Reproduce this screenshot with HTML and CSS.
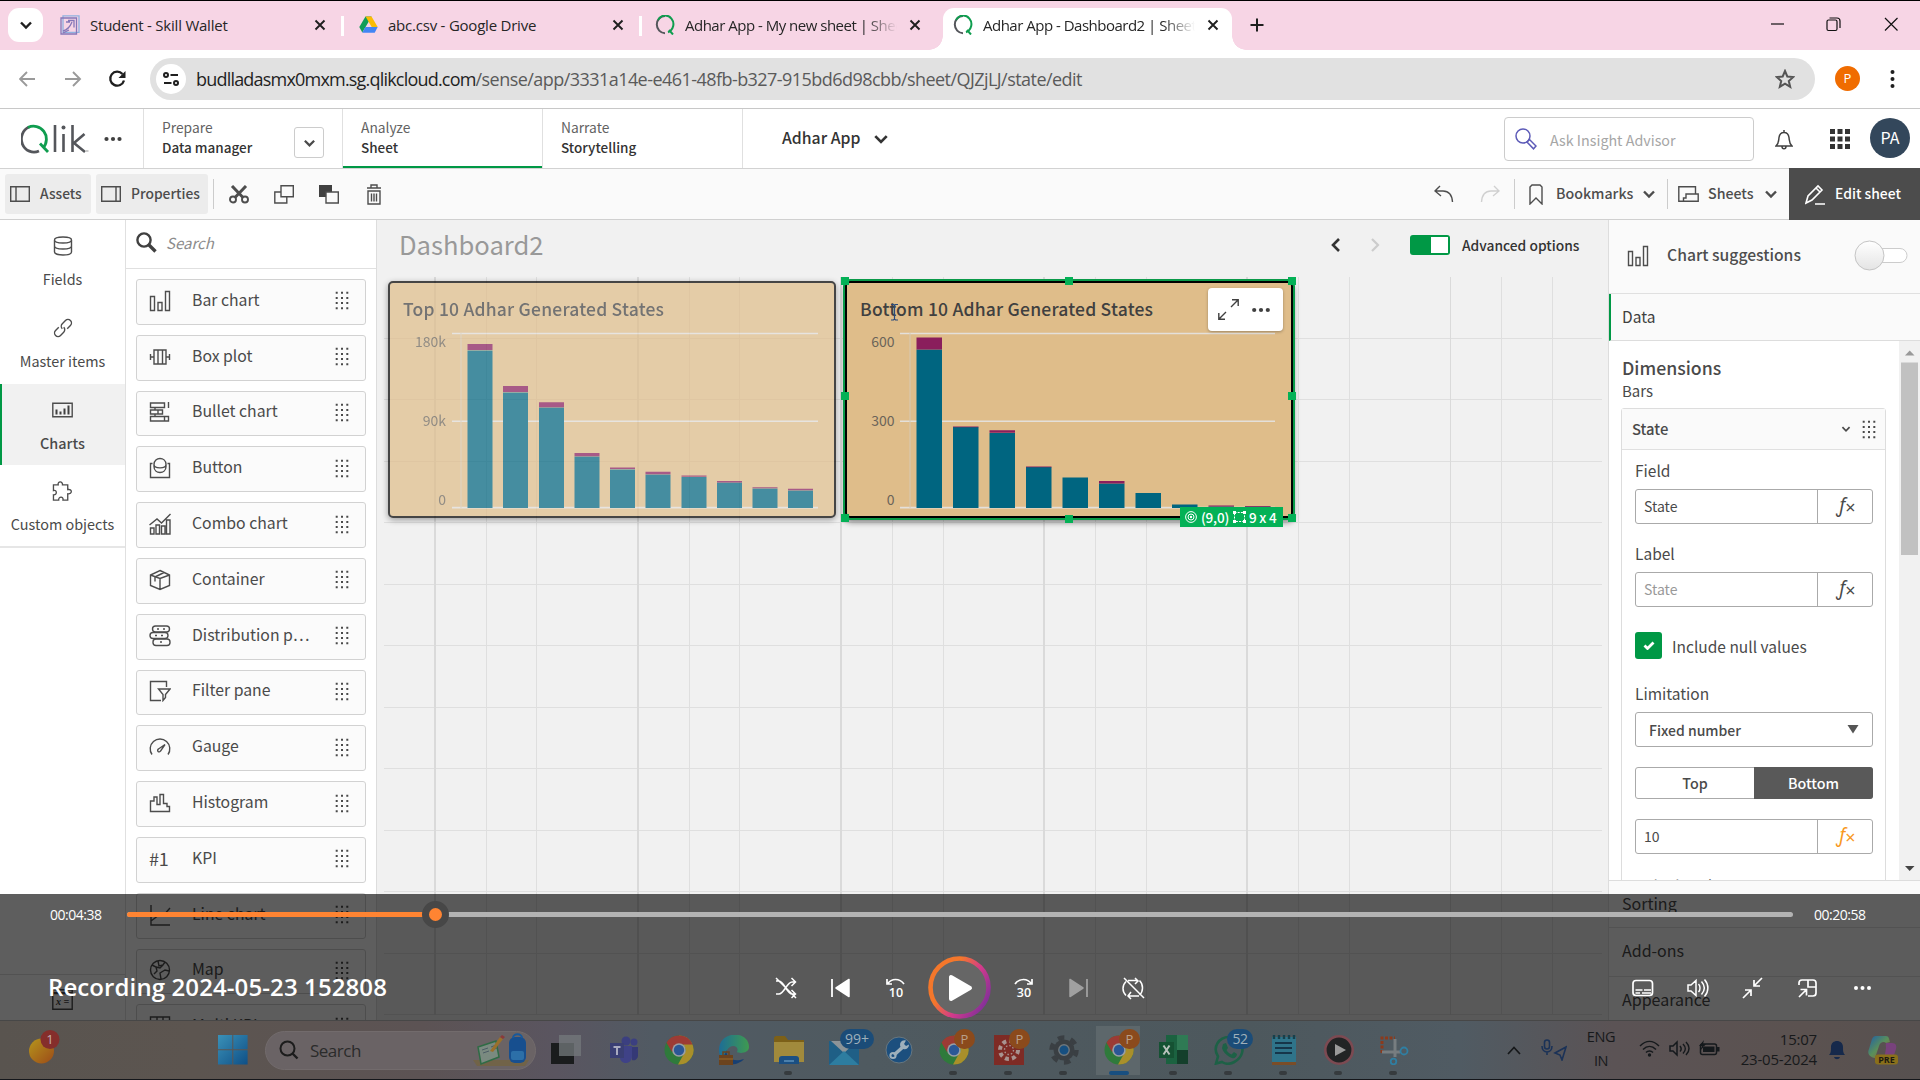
FILE: index.html
```html
<!DOCTYPE html>
<html lang="en">
<head>
<meta charset="utf-8">
<title>Adhar App - Dashboard2 | Sheet</title>
<link rel="stylesheet" href="styles.css">
</head>
<body>
<svg class="defs" width="0" height="0">
  <defs>
    <linearGradient id="ring" x1="0" y1=".2" x2="1" y2=".8"><stop offset="0.3" stop-color="#f4772b"/><stop offset=".62" stop-color="#d23a8c"/><stop offset="1" stop-color="#7c2f9a"/></linearGradient>
    <linearGradient id="win" x1="0" y1="0" x2="1" y2="1"><stop offset="0" stop-color="#3a91b8"/><stop offset="1" stop-color="#0f4f86"/></linearGradient>
    <linearGradient id="sun" x1="0" y1="0" x2="1" y2="1"><stop offset="0" stop-color="#b5961c"/><stop offset="1" stop-color="#9c4a18"/></linearGradient>
    <linearGradient id="edge" x1="0" y1="0" x2="1" y2="0"><stop offset="0" stop-color="#1d6d96"/><stop offset="1" stop-color="#3f9a50"/></linearGradient>
    <linearGradient id="cop" x1="0" y1="0" x2="1" y2="1"><stop offset="0" stop-color="#1e5fa8"/><stop offset=".5" stop-color="#5a8f5a"/><stop offset="1" stop-color="#a05a30"/></linearGradient>
    <linearGradient id="knob" x1="0" y1="0" x2="0" y2="1"><stop offset="0" stop-color="#fff"/><stop offset="1" stop-color="#e4e4e4"/></linearGradient>
  </defs>
  <symbol id="i-q" viewBox="0 0 20 20"><path d="M10 1a8.2 8.6 0 0 0 0 17.200" fill="none" stroke="#54565b" stroke-width="2"/><path d="M3 5A8.200 8.600 0 1 1 13 17.200" fill="none" stroke="#0f9d4f" stroke-width="2"/><path d="M14 15l4 4.500" stroke="#0f9d4f" stroke-width="2"/></symbol>
  <symbol id="i-x" viewBox="0 0 12 12"><path d="M1.500 1.500l9 9M10.500 1.500l-9 9" stroke="#1f1f1f" stroke-width="1.900"/></symbol>
  <symbol id="i-chev" viewBox="0 0 14 10"><path d="M2 2.500l5 5 5-5" fill="none" stroke="currentColor" stroke-width="2.400"/></symbol>
  <symbol id="i-grip" viewBox="0 0 14 19"><g fill="#4a4a4a"><path d="M.7.700h2v2h-2zM6 .7h2v2H6zM11.300.7h2v2h-2zM.7 5.900h2v2h-2zM6 5.900h2v2H6zM11.300 5.900h2v2h-2zM.7 11.100h2v2h-2zM6 11.100h2v2H6zM11.300 11.100h2v2h-2zM.7 16.300h2v2h-2zM6 16.300h2v2H6zM11.300 16.300h2v2h-2z"/></g></symbol>
  <symbol id="i-bars" viewBox="0 0 22 22"><path d="M1.500 6.500h4v14h-4zM9 12.500h4v8H9zM16.500 1.500h4v19h-4z"/></symbol>
  <symbol id="i-box" viewBox="0 0 22 22"><path d="M5 4h12v14H5zM9 4v14M13.500 4v14M1.500 8v6M20.500 8v6M1.500 11H5M17 11h3.500"/></symbol>
  <symbol id="i-bullet" viewBox="0 0 22 22"><path d="M1.500 2h14v4.500h-14zM1.500 9h12v4h-12zM1.500 15.500h18V20h-18zM6 6.500V9M6 13v2.500M19.500 1v6M9 9v4M15.500 15.500V20"/></symbol>
  <symbol id="i-button" viewBox="0 0 22 22"><path d="M3.500 6.500h-2v14h19v-14h-2M5 7.500c0-8 12-8 12 0v2c0 8-12 8-12 0zM5 7.500c0 4.500 12 4.500 12 0"/></symbol>
  <symbol id="i-combo" viewBox="0 0 22 22"><path d="M1.500 15h3.500v6H1.500zM7 12h3.500v9H7zM12.500 13H16v8h-3.500zM17.500 7h3.500v14h-3.500zM.5 12L8 6l4.500 4L21.500 1"/></symbol>
  <symbol id="i-cont" viewBox="0 0 22 22"><path d="M11 1.500l9.500 4.500v10.500L11 20.500l-9.500-4V6zM1.500 6L11 9.500 20.500 6M11 9.500v11M6 8v4.500M6 8l9-4.500"/></symbol>
  <symbol id="i-dist" viewBox="0 0 22 22"><rect x="3.500" y="1" width="17" height="6" rx="3"/><rect x="1" y="7.500" width="18" height="6" rx="3"/><rect x="4" y="14" width="17" height="6.500" rx="3"/><path d="M8 4h2M14 4h2M6 10.500h2M12 10.500h2M11 17h2"/></symbol>
  <symbol id="i-filter" viewBox="0 0 22 22"><path d="M17.500 7V1.500h-16v19H12M9.500 9h11.500l-4.500 5.500v3l-2.500 3v-6z"/></symbol>
  <symbol id="i-gauge" viewBox="0 0 22 22"><path d="M3 18.500A9.800 9.800 0 1 1 19 18.500M16 8.500l-6.500 4.500a1.500 1.500 0 1 0 2 2z"/></symbol>
  <symbol id="i-hist" viewBox="0 0 22 22"><path d="M1.500 19.500V9H5V5h3v7.500h3V2.500h3.500v9H18v3h2.500v5z"/></symbol>
  <symbol id="i-line" viewBox="0 0 22 22"><path d="M2 1v20h19M2 17l8-6 4 1 7-8"/></symbol>
  <symbol id="i-map" viewBox="0 0 22 22"><circle cx="11" cy="11" r="9.500"/><path d="M3 6l4 2 1 4-3 3M9 2l1 5 4-1 2-3M12 20l-1-6 5-3 4 1M7 8l4 1 3-3"/></symbol>
  <symbol id="i-table" viewBox="0 0 22 22"><path d="M1.500 2h19v18h-19zM1.500 8h19M8 2v18M14 2v18"/></symbol>
  <symbol id="i-chrome" viewBox="0 0 30 30"><circle cx="15" cy="15" r="14.500" fill="#2f7a3b"/><path d="M15 .5A14.500 14.500 0 0 1 27.600 22.300 14.500 14.500 0 0 1 14 29.500L22 15z" fill="#a98f2a"/><path d="M2.500 7.700A14.500 14.500 0 0 1 28.500 9.500H15L8 17z" fill="#9c3b35"/><circle cx="15" cy="15" r="6.800" fill="#9a9fa4"/><circle cx="15" cy="15" r="5.200" fill="#2b5796"/></symbol>
</svg>

<div class="app">
  <header class="tabs">
    <span class="tab-menu"><svg width="14" height="10"><use href="#i-chev"/></svg></span>
    <div class="tab t1"><svg width="20" height="20" viewBox="0 0 20 20"><g fill="none" stroke="#8577b8" stroke-width="1.300"><path d="M3 .8h16v16.500H3z" stroke="#8fb2e0"/><path d="M1 3h15.500v16H1z"/><path d="M3 16c4-1 7-4 9-9M8 5.500h6v7M6 7h4M3 18l6-3"/></g></svg><b class="name s1">Student - Skill Wallet</b><svg class="close" width="12" height="12"><use href="#i-x"/></svg></div>
    <div class="tab t2"><svg width="19" height="18" viewBox="0 0 19 18"><path d="M6.500.5h6L9.500 6 3.300 16.500.3 11z" fill="#109d58"/><path d="M6.500.5h6L18.700 11h-6z" fill="#fbbc04"/><path d="M3.300 16.800L6.400 11h12.300l-3 5.800z" fill="#4285f4"/></svg><b class="name s2">abc.csv - Google Drive</b><svg class="close" width="12" height="12"><use href="#i-x"/></svg></div>
    <div class="tab t3"><svg width="20" height="20"><use href="#i-q"/></svg><b class="name fade">Adhar App - My new sheet | Sheet</b><svg class="close" width="12" height="12"><use href="#i-x"/></svg></div>
    <div class="tab t4"><svg width="20" height="20"><use href="#i-q"/></svg><b class="name fade">Adhar App - Dashboard2 | Sheet</b><svg class="close" width="12" height="12"><use href="#i-x"/></svg></div>
    <svg class="plus" width="14" height="14" viewBox="0 0 14 14"><path d="M7 .5v13M.5 7h13" stroke="#1f1f1f" stroke-width="2"/></svg>
    <svg class="winbtns" width="130" height="16" viewBox="0 0 130 16"><g fill="none" stroke="#111" stroke-width="1.200"><path d="M1 8h13"/><rect x="57" y="4" width="10" height="10.500" rx="1.500"/><path d="M59.500 2H67a3 3 0 0 1 3 3v7"/><path d="M115 2l12.500 12.500M127.500 2L115 14.500"/></g></svg>
  </header>

  <div class="urlbar">
    <svg class="nav" width="108" height="20" viewBox="0 0 108 20"><g fill="none" stroke="#9a9a9a" stroke-width="1.900"><path d="M16 10H2M8 3l-7 7 7 7M46 10h14M54 3l7 7-7 7"/><path d="M105.500 12a7 7 0 1 1-1.500-6.500" stroke="#1f1f1f" stroke-width="2.300" transform="translate(-.5 -.5)"/><path d="M106.500 2v7h-7z" fill="#1f1f1f" stroke="none"/></g></svg>
    <div class="pill">
      <span class="tune"><svg width="16" height="14" viewBox="0 0 16 14"><g fill="none" stroke="#1f1f1f" stroke-width="2"><circle cx="3" cy="3" r="2"/><path d="M7.500 3H15M1 11h7.500"/><circle cx="13" cy="11" r="2"/></g></svg></span>
      <span class="url"><i>budlladasmx0mxm.sg.qlikcloud.com</i>/sense/app/3331a14e-e461-48fb-b327-915bd6d98cbb/sheet/QJZjLJ/state/edit</span>
      <svg class="star" width="20" height="20" viewBox="0 0 20 20"><path d="M10 2l2.300 5.500 6 .5-4.500 4 1.400 5.800L10 14.700l-5.200 3.100L6.200 12 1.700 8l6-.5z" fill="none" stroke="#555" stroke-width="2"/></svg>
    </div>
    <span class="pavatar">P</span>
    <svg class="kebab" width="5" height="20" viewBox="0 0 5 20"><g fill="#1f1f1f"><circle cx="2.500" cy="3" r="2"/><circle cx="2.500" cy="10" r="2"/><circle cx="2.500" cy="17" r="2"/></g></svg>
  </div>

  <div class="qbar">
    <div class="brand">
      <svg width="68" height="30" viewBox="0 0 68 30"><path d="M8 3A12.500 13 0 1 0 18 27" fill="none" stroke="#54565b" stroke-width="2.800"/><path d="M7 3.500A12.800 13 0 0 1 22 24M19 19.500l8 8.500" fill="none" stroke="#0f9d4f" stroke-width="2.800"/><path d="M34 1v27M42.500 10v18M51.500 1v27M63.500 10L53 19l11 9" fill="none" stroke="#54565b" stroke-width="2.600"/><circle cx="42.500" cy="3.500" r="2" fill="#54565b"/><path d="M65 27h2.500" stroke="#999"/></svg>
      <svg width="18" height="6" viewBox="0 0 18 6"><g fill="#404040"><circle cx="2.500" cy="3" r="2.100"/><circle cx="9" cy="3" r="2.100"/><circle cx="15.500" cy="3" r="2.100"/></g></svg>
    </div>
    <div class="step prep"><div><p>Prepare</p><b>Data manager</b></div><span class="drop"><svg width="13" height="10"><use href="#i-chev"/></svg></span></div>
    <div class="step on"><div><p>Analyze</p><b>Sheet</b></div></div>
    <div class="step"><div><p>Narrate</p><b>Storytelling</b></div></div>
    <div class="appname"><span>Adhar App</span><svg width="16" height="12"><use href="#i-chev"/></svg></div>
    <div class="ask"><svg width="22" height="22" viewBox="0 0 22 22"><g fill="none" stroke="#5d5bb8" stroke-width="1.500"><circle cx="8" cy="8" r="7"/><path d="M12 14l2.500-2.500 6.500 6.500-2.500 2.800z"/></g></svg>Ask Insight Advisor</div>
    <svg class="bell" width="18" height="21" viewBox="0 0 18 21"><path d="M1 17h16c-3-2.500-2.500-5-3-8.500C13.500 5 11.500 3.500 9 3.500S4.500 5 4 8.500C3.500 12 4 14.500 1 17zM9 1v2.500M7 17.500c0 3 4 3 4 0" fill="none" stroke="#404040" stroke-width="1.500"/></svg>
    <svg class="waffle" width="20" height="20" viewBox="0 0 20 20"><path d="M0 0h5v5H0zM7.500 0h5v5h-5zM15 0h5v5h-5zM0 7.500h5v5H0zM7.500 7.500h5v5h-5zM15 7.500h5v5h-5zM0 15h5v5H0zM7.500 15h5v5h-5zM15 15h5v5h-5z" fill="#333"/></svg>
    <span class="uavatar">PA</span>
  </div>

  <div class="tools">
    <span class="tbtn assets"><svg width="20" height="16" viewBox="0 0 20 16"><path d="M.7.700h18.600v14.600H.7zM6 .7v14.600" class="ln"/></svg><u>Assets</u></span>
    <span class="tbtn props"><svg width="20" height="16" viewBox="0 0 20 16"><path d="M.7.700h18.600v14.600H.7zM15 .7v14.600" class="ln"/></svg><u>Properties</u></span>
    <i class="sep"></i>
    <svg class="cut" width="20" height="19" viewBox="0 0 20 19"><g fill="none" stroke="#4d4d4d" stroke-width="1.900"><circle cx="4" cy="14.500" r="3"/><circle cx="16" cy="14.500" r="3"/><path d="M3 1l11 11.500M17 1L6 12.500" stroke-width="3"/></g></svg>
    <svg class="cpy" width="20" height="19" viewBox="0 0 20 19"><path d="M7 .8h12.300v11H7zM7 7H.8v11h12v-6" class="ln"/></svg>
    <svg class="pst" width="20" height="19" viewBox="0 0 20 19"><path d="M0 0h13v7H7v5H0z" fill="#404040"/><path d="M7 7h12.300v11H7z" class="ln"/></svg>
    <svg class="del" width="14" height="21" viewBox="0 0 14 21"><path d="M0 4h14M4 4V1h6v3M1 7h12v13H1zM4.500 9.500v8M7 9.500v8M9.500 9.500v8" class="ln"/></svg>
    <svg class="undo" width="20" height="20" viewBox="0 0 20 20"><path d="M6 2L1 7l6 5M1 7h8c6 0 9 4 9.500 11" class="ln"/></svg>
    <svg class="redo" width="20" height="20" viewBox="0 0 20 20"><path d="M14 2l5 5-6 5M19 7h-8c-6 0-9 4-9.500 11" class="ln off"/></svg>
    <i class="sep sep2"></i>
    <svg class="bm" width="14" height="21" viewBox="0 0 14 21"><path d="M1 3l2-2h8l2 2v17l-6-6-6 6z" class="ln"/></svg><u class="bmt">Bookmarks</u><svg width="14" height="10"><use href="#i-chev"/></svg>
    <i class="sep sep3"></i>
    <svg class="sh" width="21" height="16" viewBox="0 0 21 16"><path d="M5.500 15.200H.8V.8h16.700V8M5.500 15.200h14.700V8H8v4H5.500z" class="ln"/></svg><u class="sht">Sheets</u><svg width="14" height="10"><use href="#i-chev"/></svg>
    <span class="edit"><svg width="21" height="21" viewBox="0 0 21 21"><path d="M1 19l2-7L13 2l4 4L7 16l-6 3zM11 4l4 4M10 20h10" fill="none" stroke="#fff" stroke-width="1.600"/></svg><u>Edit sheet</u></span>
  </div>

  <main>
    <nav class="rail">
      <a><svg width="20" height="20" viewBox="0 0 20 20"><path d="M1.500 4c0-4 17-4 17 0v12c0 4-17 4-17 0zM1.500 4c0 4 17 4 17 0M1.500 10c0 4 17 4 17 0" class="ln"/></svg><span>Fields</span></a>
      <a><svg width="20" height="20" viewBox="0 0 20 20"><g class="ln" transform="rotate(-45 10 10)"><path d="M7.500 6.500H3a3.500 3.500 0 0 0 0 7h4.500a3.500 3.500 0 0 0 3.500-3.500"/><path d="M9 10a3.500 3.500 0 0 1 3.500-3.500H17a3.500 3.500 0 0 1 0 7h-4.500"/></g></svg><span>Master items</span></a>
      <a class="sel"><svg width="21" height="15" viewBox="0 0 21 15"><path d="M.8.800h19.400v13.400H.8z" class="ln"/><path d="M4.500 7v5M8.500 9v3M12.500 6v6M16.500 3v9" stroke="#404040" stroke-width="2"/></svg><span>Charts</span></a>
      <a><svg width="21" height="21" viewBox="0 0 21 21"><path d="M1 4h5c-1-4 5-4 4.500 0H16v5c5-1 5 5 0 4.500V20h-5c1-4-5-4-4.500 0H1v-5.500c4 .5 4-5.500 0-4.500z" class="ln"/></svg><span>Custom objects</span></a>
      <div class="vars"><svg width="21" height="21" viewBox="0 0 21 21"><path d="M.8 4.500h19.400v15.700H.8zM.8.800h19.400v3H.8z" class="ln"/><text x="4" y="16" class="xeq">x =</text></svg></div>
    </nav>

    <section class="assetlist">
      <div class="search"><svg width="21" height="21" viewBox="0 0 21 21"><circle cx="8" cy="8" r="6.600" fill="none" stroke="#404040" stroke-width="2.400"/><path d="M13 13l6.500 6.500" stroke="#404040" stroke-width="3.400"/></svg><em>Search</em></div>
      <ul>
        <li><svg class="ic"><use href="#i-bars"/></svg><span>Bar chart</span><svg class="gr"><use href="#i-grip"/></svg></li>
        <li><svg class="ic"><use href="#i-box"/></svg><span>Box plot</span><svg class="gr"><use href="#i-grip"/></svg></li>
        <li><svg class="ic"><use href="#i-bullet"/></svg><span>Bullet chart</span><svg class="gr"><use href="#i-grip"/></svg></li>
        <li><svg class="ic"><use href="#i-button"/></svg><span>Button</span><svg class="gr"><use href="#i-grip"/></svg></li>
        <li><svg class="ic"><use href="#i-combo"/></svg><span>Combo chart</span><svg class="gr"><use href="#i-grip"/></svg></li>
        <li><svg class="ic"><use href="#i-cont"/></svg><span>Container</span><svg class="gr"><use href="#i-grip"/></svg></li>
        <li><svg class="ic"><use href="#i-dist"/></svg><span>Distribution p…</span><svg class="gr"><use href="#i-grip"/></svg></li>
        <li><svg class="ic"><use href="#i-filter"/></svg><span>Filter pane</span><svg class="gr"><use href="#i-grip"/></svg></li>
        <li><svg class="ic"><use href="#i-gauge"/></svg><span>Gauge</span><svg class="gr"><use href="#i-grip"/></svg></li>
        <li><svg class="ic"><use href="#i-hist"/></svg><span>Histogram</span><svg class="gr"><use href="#i-grip"/></svg></li>
        <li><b class="hash">#1</b><span>KPI</span><svg class="gr"><use href="#i-grip"/></svg></li>
        <li><svg class="ic"><use href="#i-line"/></svg><span>Line chart</span><svg class="gr"><use href="#i-grip"/></svg></li>
        <li><svg class="ic"><use href="#i-map"/></svg><span>Map</span><svg class="gr"><use href="#i-grip"/></svg></li>
        <li><svg class="ic"><use href="#i-table"/></svg><span>Multi KPI</span><svg class="gr"><use href="#i-grip"/></svg></li>
      </ul>
    </section>

    <section class="sheet">
      <div class="sheethead">
        <h1>Dashboard2</h1>
        <svg class="pager" width="50" height="14" viewBox="0 0 50 14"><path d="M9 1L3 7l6 6" fill="none" stroke="#333" stroke-width="2.600"/><path d="M42 1l6 6-6 6" fill="none" stroke="#ccc" stroke-width="2.200"/></svg>
        <span class="switch"></span><b>Advanced options</b>
      </div>
      <div class="grid">
        <div class="card dim">
          <svg width="444" height="233" viewBox="390 283 444 233">
            <text x="403" y="315.500" class="ct" textLength="261">Top 10 Adhar Generated States</text>
            <g class="gl"><path d="M452 333.500h366M452 421.300h366M452 507.600h366"/><path d="M461 333v175" class="v"/></g>
            <g class="ax"><text x="446" y="347">180k</text><text x="446" y="426">90k</text><text x="446" y="505">0</text></g>
            <path class="te" d="M467.500 350.500h25v157.500h-25zM503 392.500h25v115.500h-25zM539 407.500h25v100.500h-25zM574.500 456.500h25v51.500h-25zM610 469.500h25v38.500h-25zM645.500 474.500h25v33.500h-25zM681.500 477h25v31h-25zM717 482.500h25v25.500h-25zM752.500 488.500h25v19.500h-25zM788 490.500h25v17.500h-25z"/>
            <path class="ma" d="M467.500 344h25v6h-25zM503 386h25v6h-25zM539 402.300h25v5h-25zM574.500 453h25v3.300h-25zM610 467.500h25v1.500h-25zM645.500 471.700h25v2.500h-25zM681.500 475.500h25v1.200h-25zM717 481h25v1.400h-25zM752.500 487.300h25v1h-25zM788 488.800h25v1.500h-25z"/>
          </svg>
        </div>
        <div class="card act">
          <svg width="444" height="233" viewBox="847 283 444 233">
            <text x="860" y="315.500" class="ct" textLength="293">Bottom 10 Adhar Generated States</text>
            <g class="gl"><path d="M900 333.500h375M900 421.300h375M900 507.600h375"/><path d="M910 333v175" class="v"/></g>
            <g class="ax"><text x="894.500" y="347">600</text><text x="894.500" y="426">300</text><text x="894.500" y="505">0</text></g>
            <path class="te" d="M916.500 349.500h25.500v158.500h-25.500zM953 427h25.500v81H953zM989.500 433h25.500v75h-25.500zM1026 467h25.500v41H1026zM1062.500 477.500h25.500v30.500h-25.500zM1099 483.500h25.500v24.500H1099zM1135.500 493h25.500v15h-25.500zM1172 504.500h25.500v3.500H1172zM1208.500 506.500h25.500v1.500h-25.500zM1245 506.500h25.500v1.500H1245z"/>
            <path class="ma" d="M916.500 337.500h25.500v12h-25.500zM989.500 430.300h25.500v2.500h-25.500zM1099 481h25.500v2.400H1099zM1208.500 505.500h25.500v1h-25.500zM1245 506h25.500v.7H1245zM953 426.500h25.500v.7H953zM1026 466.500h25.500v.7H1026z"/>
            <path d="M891 304.500h2.500l1 1 1-1h2.500M894.500 305.500v14M891 320h2.500l1-1 1 1h2.500" fill="none" stroke="#2b4a7a" stroke-width="1.200"/>
          </svg>
          <i class="h nw"></i><i class="h n"></i><i class="h ne"></i><i class="h w"></i><i class="h e"></i><i class="h sw"></i><i class="h s"></i><i class="h se"></i>
          <div class="pop"><svg width="21" height="21" viewBox="0 0 21 21"><path d="M13 8l7-7M14 .8h6.200V7M8 13l-7 7M.8 14v6.200H7" fill="none" stroke="#404040" stroke-width="1.400"/></svg><svg width="18" height="6" viewBox="0 0 18 6"><g fill="#404040"><circle cx="2.200" cy="3" r="2.100"/><circle cx="9" cy="3" r="2.100"/><circle cx="15.800" cy="3" r="2.100"/></g></svg></div>
          <div class="size"><svg width="12" height="12" viewBox="0 0 12 12"><g fill="none" stroke="#fff"><circle cx="6" cy="6" r="5.400"/><circle cx="6" cy="6" r="3"/></g><circle cx="6" cy="6" r="1.200" fill="#fff"/></svg><span>(9,0)</span><svg width="13" height="12" viewBox="0 0 13 12"><path d="M1.500 1.500h10v9h-10z" fill="none" stroke="#fff" stroke-dasharray="2 1.200"/><path d="M0 0h3v3H0zM10 0h3v3h-3zM0 9h3v3H0zM10 9h3v3h-3z" fill="#fff"/></svg><span>9 x 4</span></div>
        </div>
      </div>
    </section>

    <aside>
      <div class="sugg"><svg class="ic"><use href="#i-bars"/></svg><b>Chart suggestions</b><svg width="54" height="32" viewBox="0 0 54 32"><rect x="20" y="8.500" width="33" height="14" rx="7" fill="#fff" stroke="#ccc"/><circle cx="15.500" cy="15.500" r="14.500" fill="url(#knob)" stroke="#c4c4c4"/></svg></div>
      <div class="arow data">Data</div>
      <div class="abody">
        <div class="acol">
          <h2>Dimensions</h2><p class="bars">Bars</p>
          <div class="dim-box">
            <div class="dim-head"><b>State</b><svg width="10" height="8"><use href="#i-chev"/></svg><svg class="gr"><use href="#i-grip"/></svg></div>
            <div class="dim-body">
              <label>Field</label>
              <div class="inp"><span>State</span><i>ƒ<small>×</small></i></div>
              <label class="l2">Label</label>
              <div class="inp ph"><span>State</span><i>ƒ<small>×</small></i></div>
              <div class="chk"><span><svg width="12" height="9" viewBox="0 0 12 9"><path d="M1.500 4.500l3 3 6-6" fill="none" stroke="#fff" stroke-width="2.800"/></svg></span>Include null values</div>
              <label class="l3">Limitation</label>
              <div class="inp select"><b>Fixed number</b><svg width="12" height="9" viewBox="0 0 12 9"><path d="M.5 0h11L6 8.500z" fill="#555"/></svg></div>
              <div class="seg"><b>Top</b><b class="on">Bottom</b></div>
              <div class="inp or"><span>10</span><i>ƒ<small>×</small></i></div>
              <label class="cut-off">Calculated measure</label>
            </div>
          </div>
        </div>
        <div class="sbar"><svg width="21" height="539" viewBox="0 0 21 539"><path d="M6 14.500h9.500L10.700 9.500z" fill="#999"/><path d="M2 21.500h17V214H2z" fill="#c1c1c1"/><path d="M6 525h9.500l-4.800 5z" fill="#444"/></svg></div>
      </div>
      <div class="arow first">Sorting</div>
      <div class="arow">Add-ons</div>
      <div class="arow last">Appearance</div>
    </aside>
  </main>

  <section class="player">
    <div class="seek"><span class="t">00:04:38</span><div class="track"><i class="done"></i><i class="thumb"></i></div><span class="t">00:20:58</span></div>
    <div class="ctl">
      <h3>Recording 2024-05-23 152808</h3>
      <svg width="390" height="66" viewBox="764 955 390 66">
        <g fill="none" stroke="#fff" stroke-width="1.800">
          <path d="M776 981h3c5 0 8 13 13 13h3M776 994h3c5 0 8-12 13-12h3M791.500 978l4 4-4 4M791.500 990l4 4-4 4M776 978l20 20" stroke-width="1.500"/>
          <path d="M832 979v18"/>
          <path d="M887 979v5h5M887.500 984c4-6 12-6 16.500 0" stroke-width="1.700"/>
          <path d="M1032 979v5h-5M1031.500 984c-4-6-12-6-16.500 0" stroke-width="1.700"/>
          <path d="M1087 979v18" stroke="#a0a0a0"/>
          <path d="M1128 980.500h9M1135 978l3 3-3 3M1139.500 980.500c4 4 4 11 0 14.500M1139 996h-10M1131 992l-3 4 3 3M1126 981.500c-4 4-4 10 0 14M1124 978l20 20" stroke-width="1.500"/>
        </g>
        <path d="M849 979.500v17l-13-8.500z" fill="#fff" stroke="#fff" stroke-linejoin="round" stroke-width="1.500"/>
        <path d="M1070 979.500v17l13-8.500z" fill="#a0a0a0" stroke="#a0a0a0" stroke-linejoin="round" stroke-width="1.500"/>
        <g class="sk"><text x="896" y="997">10</text><text x="1024" y="997">30</text></g>
        <circle cx="959.500" cy="987.500" r="29" fill="#666" stroke="url(#ring)" stroke-width="4.600"/>
        <path d="M951 977v22l19-11z" fill="#fff" stroke="#fff" stroke-linejoin="round" stroke-width="4"/>
      </svg>
      <svg class="rightctl" width="242" height="24" viewBox="1630 976 242 24">
        <g fill="none" stroke="#fff" stroke-width="1.700">
          <rect x="1633" y="980.500" width="19.500" height="15" rx="3"/><path d="M1635.500 990h7M1644 990h7M1635.500 993h4.500M1642 993h9" stroke-width="1.500"/>
          <path d="M1688 985h3l5-4.500v15l-5-4.500h-3zM1698.500 984c2 2 2 6 0 8M1701.500 981.500c3.500 4 3.500 9 0 13M1704.500 979.500c4.500 5 4.500 12 0 17" stroke-width="1.500"/>
          <path d="M1762 978l-8 8M1754 980v6h6M1743 998l8-8M1745 990h6v6"/>
          <path d="M1799 985v-2c0-2 1-3 3-3h11c2 0 3 1 3 3v10c0 2-1 3-3 3h-5M1808 980v7h8M1799 997l7-7M1800.500 989.500h6v6"/>
        </g>
        <g fill="#fff"><circle cx="1856" cy="988" r="2"/><circle cx="1862.500" cy="988" r="2"/><circle cx="1869" cy="988" r="2"/></g>
      </svg>
    </div>
  </section>

  <footer class="taskbar">
    <svg class="widget" width="34" height="36" viewBox="0 0 34 36"><ellipse cx="13.500" cy="21" rx="12.500" ry="12.500" fill="url(#sun)"/><circle cx="22" cy="9.500" r="9.500" fill="#852e2b"/><text x="22" y="14" class="bd">1</text></svg>
    <svg class="start" width="30" height="30" viewBox="0 0 30 30"><path d="M0 0h14.300v14.300H0zM15.300 0h14.300v14.300H15.300zM0 15.300h14.300v14.300H0zM15.300 15.300h14.300v14.300H15.300z" fill="url(#win)"/></svg>
    <div class="tsearch"><svg width="20" height="20" viewBox="0 0 20 20"><circle cx="8.500" cy="8.500" r="7" fill="none" stroke="#1c1c1c" stroke-width="2"/><path d="M13.500 13.500l5 5" stroke="#1c1c1c" stroke-width="2.400"/></svg><span>Search</span>
      <svg class="book" width="58" height="34" viewBox="0 0 58 34"><path d="M0 27h56l-4 6H4z" fill="#716348"/><path d="M5 14l18-6 3 16-18 7z" fill="#7a8a80" stroke="#2f6b45" stroke-width="1.500"/><path d="M9 17l6-2M10 20l6-2M18 14l5-2M19 17l5-2" stroke="#4c5c66"/><path d="M17 18L27 4l3 2-10 13z" fill="#99702c"/><path d="M27 4l2-2 3 2-2 2z" fill="#8a3a3a"/><rect x="36" y="4" width="17" height="26" rx="6" fill="#174f8f"/><path d="M40 5c0-5 9-5 9 0" fill="none" stroke="#17599c" stroke-width="2"/><rect x="38" y="18" width="13" height="9" rx="2" fill="#2c6fa8"/></svg></div>
    <div class="apps">
      <span class="app-i tv"><svg width="30" height="30" viewBox="0 0 30 30"><path d="M0 8h23v21H0z" fill="#1a1c1d"/><path d="M8 0h22v21H8z" fill="#74797c" opacity=".75"/></svg></span>
      <span class="app-i tm"><svg width="30" height="30" viewBox="0 0 30 30"><circle cx="17" cy="6" r="4.500" fill="#3b3f80"/><circle cx="25" cy="7" r="3.500" fill="#3b3f80"/><path d="M10 11h13v10c0 9-11 9-12 2z" fill="#3f4287"/><path d="M23 12h6v8c0 4-3 6-6 5z" fill="#353976"/><path d="M1 8h14v15H1z" fill="#3a3f74"/><path d="M4.500 12h7M8 12v8" stroke="#a9abc0" stroke-width="2"/></svg></span>
      <span class="app-i"><svg width="30" height="30"><use href="#i-chrome"/></svg></span>
      <span class="app-i"><svg width="30" height="30" viewBox="0 0 30 30"><path d="M0 15C0-5 30-5 30 12c0 6-9 7-12 5 3-6-6-9-10-2-2 6 2 13 10 13C7 30 0 24 0 15z" fill="url(#edge)"/><path d="M8 15c-2 7 5 13 17 9-5 6-17 8-22 0z" fill="#173f72"/><path d="M0 20h14v10H0z" fill="#6b431e"/><path d="M4 20v-3h6v3" fill="none" stroke="#6b431e" stroke-width="1.500"/><path d="M0 24h14" stroke="#9a6d28"/></svg></span>
      <span class="app-i dot"><svg width="30" height="28" viewBox="0 0 30 28"><path d="M0 2c0-1 1-2 2-2h9l3 4h16v6H0z" fill="#7c6018"/><path d="M0 6h30v20H0z" fill="#a18a3c"/><path d="M5 28v-5c0-2 1-3 3-3h14c2 0 3 1 3 3v5z" fill="#1b4f82"/><path d="M10 25h10" stroke="#5d8fb8" stroke-width="1.500"/></svg></span>
      <span class="app-i"><svg width="30" height="24" viewBox="0 0 30 24" class="low"><path d="M0 0h30v24H0z" fill="#1f5f86"/><path d="M2 0h26L15 12z" fill="#8c9498"/><path d="M0 24L15 10l15 14z" fill="#2d7da0"/></svg><i class="badge wide">99+</i></span>
      <span class="app-i"><svg width="28" height="28" viewBox="0 0 28 28"><circle cx="14" cy="14" r="13" fill="#1c4f7e" stroke="#68777f"/><path d="M9 19L19 10" stroke="#9fb0bb" stroke-width="3.500"/><circle cx="8" cy="19.500" r="2.600" fill="none" stroke="#9fb0bb" stroke-width="2"/><path d="M21 4.500a4.500 4.500 0 1 0 3 4l-3 1.500-2-2z" fill="#9fb0bb"/></svg></span>
      <span class="app-i dot"><svg width="30" height="30"><use href="#i-chrome"/></svg><i class="badge p">P</i></span>
      <span class="app-i dot"><svg width="30" height="30" viewBox="0 0 30 30"><path d="M0 0h30v30H0z" fill="#7e2b25"/><circle cx="15" cy="15" r="9" fill="none" stroke="#a89390" stroke-width="4" stroke-dasharray="4 3.070"/><circle cx="15" cy="15" r="4.500" fill="none" stroke="#a89390" stroke-width="1.400" stroke-dasharray="1.500 2"/></svg><i class="badge p">P</i></span>
      <span class="app-i dot"><svg width="30" height="30" viewBox="0 0 30 30"><circle cx="15" cy="15" r="12.500" fill="none" stroke="#3a3f43" stroke-width="4.500" stroke-dasharray="6.500 6.590"/><circle cx="15" cy="15" r="10.500" fill="#3a3f43"/><circle cx="15" cy="15" r="5.200" fill="#164f80" stroke="#6f777c" stroke-width="1.400"/></svg></span>
      <span class="app-i cur"><svg width="30" height="30"><use href="#i-chrome"/></svg><i class="badge p">P</i></span>
      <span class="app-i dot"><svg width="30" height="30" viewBox="0 0 30 30"><path d="M7 0h22v29H7z" fill="#1b6240"/><path d="M18 0h11v15H18z" fill="#2f7a54"/><path d="M18 15h11v14H18z" fill="#143f2b"/><path d="M0 7h15v16H0z" fill="#155233"/><path d="M4.500 10.500l6 9M10.500 10.500l-6 9" stroke="#b8c2bc" stroke-width="2"/></svg></span>
      <span class="app-i dot"><svg width="30" height="30" viewBox="0 0 30 30"><path d="M2 28.500l2-7C-2 12 5 2 15 2s15 9 13 16-12 14-20 9z" fill="none" stroke="#1d6146" stroke-width="2.600"/><path d="M9 9l3-1 2 5-1.500 2c1 2 3 4 5 4.500L20 17l3 2c0 3-3 5-5 4-5-2-9-6-10-10z" fill="#1d6146"/></svg><i class="badge n">52</i></span>
      <span class="app-i dot"><svg width="26" height="32" viewBox="0 0 26 32"><path d="M1 3h24v27H1z" fill="#2f748a"/><path d="M4 9h17M4 14h17M4 19h17" stroke="#16364a" stroke-width="1.800"/><path d="M1 28h24v3H1z" fill="#7a4d28"/><path d="M3 1v4M8 1v4M13 1v4M18 1v4M23 1v4" stroke="#16404c" stroke-width="2.400"/></svg></span>
      <span class="app-i dot"><svg width="32" height="32" viewBox="0 0 32 32"><circle cx="16" cy="16" r="13.700" fill="#222425" stroke="#7c4a52" stroke-width="2.600"/><path d="M12 10v12l11-6z" fill="#9a9a9a"/></svg></span>
      <span class="app-i dot"><svg width="30" height="30" viewBox="0 0 30 30"><path d="M3 18V3h13" fill="none" stroke="#8b3a1c" stroke-width="3" stroke-dasharray="3 1.500"/><path d="M16 4v18M3 17h18" stroke="#777d80" stroke-width="3"/><circle cx="25" cy="16" r="3.500" fill="none" stroke="#2f7fa3" stroke-width="1.800"/><circle cx="14.500" cy="26.500" r="2.800" fill="none" stroke="#2f7fa3" stroke-width="1.800"/></svg></span>
    </div>
    <svg class="caret" width="14" height="9" viewBox="0 0 14 9"><path d="M1 8l6-6.500L13 8" fill="none" stroke="#16181a" stroke-width="1.700"/></svg>
    <svg class="mic" width="26" height="22" viewBox="0 0 26 22"><g fill="none" stroke="#1b3257" stroke-width="1.600"><rect x="3.500" y="1" width="5" height="9" rx="2.500"/><path d="M1 7c0 8 10 8 10 0M6 13v3M25 8L14 14l5 2 2 5z"/></g></svg>
    <span class="lang">ENG<br>IN</span>
    <svg class="tray" width="82" height="18" viewBox="0 0 82 18"><g fill="none" stroke="#15191c" stroke-width="1.500"><path d="M1 6c6-6 13-6 19 0M4 9.500c4-4 9-4 13 0M7 12.500c2-2 5-2 7 0"/><path d="M31 6h3l4-4v13l-4-4h-3zM41 6c1.500 2 1.500 4 0 5.500M44 4c3 3 3 6.500 0 9.500M47 2c4 4 4 9 0 13"/><rect x="61.500" y="4" width="16" height="10.500" rx="2"/></g><path d="M64 6.500h11.500v5.500H64zM78 7h2.500v4.500H78zM65 0l-5 6h3l-2 5 6-7h-3z" fill="#15191c"/><circle cx="10.500" cy="15" r="1.700" fill="#15191c"/></svg>
    <span class="clock">15:07<br>23-05-2024</span>
    <svg class="nbell" width="18" height="20" viewBox="0 0 18 20"><path d="M1 15c2-2 2-4 2-8 0-8 12-8 12 0 0 4 0 6 2 8zM6 17h6c-1 3-5 3-6 0z" fill="#16294b"/></svg>
    <svg class="cop" width="30" height="30" viewBox="0 0 30 30"><path d="M8 1h10c3 0 3 3 4 6l-4 1c-2-2-6-1-7 3L7 23c-6-1-8-5-6-9L4 4c1-2 2-3 4-3z" fill="url(#cop)"/><path d="M19 8h5c4 0 5 3 4 6l-2 6c-1 4-3 5-6 5h-6c3 0 3-3 3-6l1-6c0-3-1-5 1-5z" fill="#78427c"/><rect x="7" y="19.500" width="23" height="10" rx="3" fill="#8a701b"/><text x="18.500" y="28" class="pre">PRE</text></svg>
  </footer>
</div>
</body>
</html>
```
FILE: styles.css
```css
* { box-sizing: border-box; margin: 0; padding: 0; }
body { width: 1920px; height: 1080px; overflow: hidden; font-family: "Noto Sans CJK SC", "Noto Sans", sans-serif; font-size: 16px; color: #4a4a4a; background: #fff; }
svg { display: block; flex: none; }
.defs { position: absolute; }
i { font-style: normal; }
u { text-decoration: none; padding-bottom: 2px; }
.ln { fill: none; stroke: #4d4d4d; stroke-width: 1.4; }
.off { stroke: #d0d0d0; }
.app { position: relative; width: 1920px; height: 1080px; overflow: hidden; display: flex; flex-direction: column; }

/* browser tabs */
.tabs { height: 50px; flex: none; background: #f7d5e5; border-top: 1px solid #000; display: flex; padding-left: 8px; font-family: "Open Sans", sans-serif; }
.tab-menu { width: 35px; height: 34px; margin: 7px 4px 0 0; border-radius: 11px; background: #fff; display: flex; align-items: center; justify-content: center; color: #1f1f1f; }
.tab { display: flex; align-items: center; height: 42px; margin-top: 7px; padding-bottom: 8px; }
.name { width: 214px; margin: 0 10px; font-size: 15px; font-weight: 400; letter-spacing: -.5px; color: #262626; white-space: nowrap; overflow: hidden; line-height: 24px; }
.fade { -webkit-mask-image: linear-gradient(90deg, #000 84%, transparent 99%); mask-image: linear-gradient(90deg, #000 84%, transparent 99%); }
.s1, .s2 { letter-spacing: -.22px; }
.t1 { width: 298px; padding-left: 13px; }
.t2 { width: 298px; padding-left: 14px; }
.t1, .t2 { background: linear-gradient(#fff, #fff) right 1px top 8px / 3px 20px no-repeat; }
.t3 { width: 300px; padding-left: 12px; }
.t4 { width: 289px; padding-left: 10px; background: #fff; border-radius: 11px 11px 0 0; position: relative; }
.t4::before, .t4::after { content: ""; position: absolute; bottom: 0; width: 14px; height: 14px; }
.t4::before { left: -14px; background: radial-gradient(circle at 0 0, transparent 13.500px, #fff 14px); }
.t4::after { right: -14px; background: radial-gradient(circle at 100% 0, transparent 13.500px, #fff 14px); }
.plus { margin: 17px 0 0 18px; }
.winbtns { margin: 15px 0 0 506px; }

.urlbar { height: 59px; flex: none; background: linear-gradient(#fff, #fff); border-bottom: 1px solid #c8c8c8; display: flex; padding: 8px 0 0 19px; }
.nav { margin-top: 11px; }
.pill { width: 1665px; height: 42px; margin-left: 23px; border-radius: 21px; background: #e1e1e1; display: flex; align-items: center; padding-left: 6px; }
.tune { width: 30px; height: 30px; border-radius: 50%; background: #fff; display: flex; align-items: center; justify-content: center; }
.url { margin-left: 10px; flex: 1; font: 18px/24px "Open Sans", sans-serif; letter-spacing: -.55px; color: #5a5a5a; white-space: nowrap; }
.url i { color: #1f1f1f; letter-spacing: -.8px; }
.star { margin-right: 20px; }
.pavatar { width: 25px; height: 25px; margin: 8px 0 0 20px; border-radius: 50%; background: #f06c00; color: #fff; font: 13px/25px "Open Sans", sans-serif; text-align: center; }
.kebab { margin: 11px 0 0 30px; }

/* application bar */
.qbar { height: 60px; flex: none; display: flex; background: #fff; border-bottom: 1px solid #d2d2d2; }
.brand { width: 144px; display: flex; align-items: center; gap: 15px; padding-left: 21px; border-right: 1px solid #e0e0e0; }
.step { width: 200px; padding: 8px 0 0 18px; border-right: 1px solid #e0e0e0; display: flex; font-size: 13.800px; line-height: 20px; }
.step p { color: #636363; }
.step b { display: block; font-weight: 500; font-size: 13.500px; color: #333; }
.prep { width: 199px; }
.drop { width: 30px; height: 31px; margin: 10px 18px 0 auto; border: 1px solid #ccc; border-radius: 3px; display: flex; align-items: center; justify-content: center; }
.step.on { box-shadow: inset 0 -2px #009845; }
.appname { display: flex; align-items: center; gap: 13px; width: 761px; padding-left: 39px; font-size: 15.800px; font-weight: 500; color: #333; }
.appname span { padding-bottom: 2px; }
.ask { width: 250px; height: 44px; margin-top: 8px; border: 1px solid #ccc; border-radius: 4px; display: flex; align-items: center; gap: 13px; padding-left: 10px; font-size: 14.300px; color: #a6a6a6; }
.bell { margin: 20px 0 0 21px; }
.waffle { margin: 20px 0 0 37px; }
.uavatar { width: 40px; height: 40px; margin: 9px 0 0 20px; border-radius: 50%; background: #33475b; color: #fff; font: 16px/39px "Noto Sans CJK SC", sans-serif; text-align: center; }

.tools { height: 51px; flex: none; display: flex; align-items: center; background: #fafafa; border-bottom: 1px solid #d0d0d0; padding-left: 5px; font-size: 14.200px; font-weight: 500; color: #4d4d4d; white-space: nowrap; }
.tbtn { height: 40px; border-radius: 3px; background: #ececec; display: flex; align-items: center; gap: 10px; padding-left: 5px; font-size: 13.800px; }
.assets { width: 86px; margin-right: 5px; }
.props { width: 112px; }
.sep { width: 1px; height: 30px; background: #ccc; margin-left: 5px; }
.cut { margin-left: 15px; }
.cpy { margin-left: 25px; }
.pst { margin-left: 25px; }
.del { margin-left: 28px; }
.undo { margin-left: 1053px; }
.redo { margin-left: 26px; }
.sep2 { margin-left: 14px; }
.bm { margin-left: 14px; }
.bmt { width: 76px; margin: 0 10px 0 13px; }
.sep3 { margin-left: 11px; }
.sh { margin-left: 10px; }
.sht { width: 46px; margin: 0 10px 0 9px; }
.edit { align-self: stretch; margin: -1px 0 -1px auto; width: 131px; background: #4c4c4c; color: #fff; display: flex; align-items: center; gap: 9px; padding-left: 16px; font-size: 13.900px; }

main { flex: none; height: 800px; display: flex; overflow: hidden; }
.rail { width: 126px; border-right: 1px solid #e0e0e0; background: #fff; display: flex; flex-direction: column; }
.rail a { height: 81.750px; display: flex; flex-direction: column; align-items: center; font-size: 14.400px; line-height: 20px; }
.rail a svg { margin-top: 16px; height: 20px; }
.rail a span { margin-top: 13px; }
.rail .sel { background: #f1f1f1; box-shadow: inset 2px 0 #009845; font-weight: 500; }
.rail a:nth-child(4) { height: 82.500px; border-bottom: 2px solid #e6e6e6; }
.vars { margin-top: 426px; border-top: 1px solid #ddd; padding: 14px 0 0 52px; }
.xeq { font: italic bold 10px "Liberation Serif", serif; fill: #404040; }

.assetlist { width: 251px; border-right: 1px solid #ddd; background: #fff; }
.search { height: 49px; border-bottom: 1px solid #e0e0e0; display: flex; align-items: center; gap: 9px; padding: 0 0 3px 10px; font-size: 15px; color: #8c8c8c; }
ul { list-style: none; padding: 10px 10px 0; display: flex; flex-direction: column; gap: 10px; }
li { height: 45.800px; border: 1px solid #d2d2d2; border-radius: 3px; background: #fbfbfb; display: flex; align-items: center; padding-left: 12px; font-size: 15.800px; line-height: 22px; }
li span { width: 143px; margin-left: 21px; white-space: nowrap; padding-bottom: 4px; }
li svg { margin-top: -2px; }
.ic { width: 22px; height: 22px; fill: none; stroke: #4d4d4d; stroke-width: 1.4; }
.gr { width: 14px; height: 19px; }
.hash { width: 22px; font-weight: 400; font-size: 18px; letter-spacing: -.2px; white-space: nowrap; padding-bottom: 3px; }

.sheet { width: 1231px; background: #f1f1f1; }
.sheethead { height: 57px; display: flex; align-items: center; padding: 0 0 7px 22px; }
h1 { width: 931px; font-size: 25.600px; font-weight: 400; color: #999; line-height: 36px; padding-bottom: 2px; }
.switch { width: 40px; height: 20px; margin: 0 12px 0 30px; border-radius: 3px; background: linear-gradient(#fff, #fff) right 2px center / 17px 16px no-repeat #009845; }
.sheethead b { font-size: 13.800px; font-weight: 500; color: #333; }
.grid { width: 1218px; height: 738px; margin-left: 7px; padding: 4px 0 0 4px; display: flex; gap: 9px; align-items: flex-start;
  background:
    repeating-linear-gradient(90deg, transparent 0 50px, #dadada 50px 52px, transparent 52px 203.100px),
    repeating-linear-gradient(90deg, transparent 0 50.275px, #dfdfdf 50.275px 51.275px, transparent 51.275px 101.550px, #dfdfdf 101.550px 102.550px, transparent 102.550px 152.325px, #dfdfdf 152.325px 153.325px, transparent 153.325px 203.100px),
    repeating-linear-gradient(180deg, transparent 0 60.500px, #dfdfdf 60.500px 61.500px); }
.card { position: relative; width: 448px; height: 237px; border: 2px solid #000; border-radius: 5px; background: #dfbd8a; box-shadow: 0 2px 6px rgba(0,0,0,.5); }
.dim { opacity: .71; }
.act { outline: 2px solid #0a9a48; outline-offset: 0; box-shadow: 0 4px 6px rgba(0,0,0,.5); }
.ct { font-size: 17.500px; font-weight: 500; fill: #404040; }
.gl path { fill: none; stroke: #e4e0da; stroke-width: 1.6; }
.gl .v { stroke: #d6c9b4; stroke-width: 1; }
.ax { font-size: 14px; fill: #6b6459; text-anchor: end; }
.te { fill: #006580; }
.ma { fill: #8a1e5c; }
.h { position: absolute; width: 8px; height: 8px; background: #04b156; }
.nw { left: -6px; top: -6px; }
.n { left: 218px; top: -6px; }
.ne { right: -5px; top: -6px; }
.w { left: -6px; top: 109px; }
.e { right: -5px; top: 109px; }
.sw { left: -6px; bottom: -6px; }
.s { left: 218px; bottom: -7px; }
.se { right: -5px; bottom: -6px; }
.pop { position: absolute; left: 361px; top: 5px; width: 75px; height: 43px; background: #fff; border-radius: 4px; box-shadow: 0 1px 3px rgba(0,0,0,.3); display: flex; align-items: center; gap: 13px; padding-left: 10px; }
.size { position: absolute; left: 333px; top: 224px; width: 103px; height: 20px; background: #04b156; color: #fff; display: flex; align-items: center; padding-left: 5px; gap: 4px; font-size: 13.500px; line-height: 18px; white-space: nowrap; font-weight: 500; letter-spacing: -.2px; }
.size span { padding-bottom: 1px; }
.size span:last-child { margin-left: -1px; }

/* properties panel */
aside { width: 312px; border-left: 1px solid #ddd; background: #fff; display: flex; flex-direction: column; }
.sugg { height: 74px; flex: none; background: #fafafa; border-bottom: 1px solid #e0e0e0; display: flex; align-items: center; padding: 0 0 1px 18px; }
.sugg b { width: 187px; margin-left: 18px; font-size: 15.700px; font-weight: 500; color: #4d4d4d; padding-bottom: 3px; }
.arow { height: 48.500px; flex: none; border-bottom: 1px solid #ddd; padding-left: 13px; background: #fafafa; font-size: 16px; line-height: 44px; }
.arow.data { height: 47px; border-left: 2px solid #009845; padding-left: 11px; color: #404040; font-size: 15.500px; }
.arow.first { height: 47px; }
.arow.last { border: 0; height: 44px; }
.abody { height: 540px; overflow: hidden; display: flex; border-bottom: 1px solid #ddd; flex: none; }
.acol { width: 290px; padding: 14px 0 0 12px; }
.acol h2 { font-size: 17.700px; font-weight: 500; line-height: 24px; }
.acol h2, .bars { padding-left: 1px; }
.bars { font-size: 15px; line-height: 24px; }
.dim-box { width: 265px; height: 600px; margin-top: 5px; border: 1px solid #ddd; border-radius: 3px; }
.dim-head { height: 41px; background: #fafafa; border-bottom: 1px solid #e0e0e0; display: flex; align-items: center; padding-left: 10px; font-size: 14.800px; }
.dim-head b { width: 209px; font-weight: 500; padding-bottom: 2px; }
.dim-head .gr { margin-left: 11px; }
.dim-body { padding: 9px 13px; }
label { display: block; font-size: 15.500px; line-height: 23px; padding-bottom: 7px; }
.inp { width: 238px; height: 35px; border: 1px solid #aaa; border-radius: 3px; display: flex; align-items: center; padding-left: 8px; font-size: 14px; }
.inp span { flex: 1; padding-bottom: 1px; }
.inp i { width: 55px; height: 33px; border-left: 1px solid #aaa; font: italic 19px/29px "Noto Sans", sans-serif; text-align: center; padding-left: 3px; }
.inp small { font: 18px/30px "Noto Sans", sans-serif; position: relative; top: 2px; }
.ph span { color: #999; }
.or i { color: #f8981d; }
.l2 { margin-top: 18px; }
.chk { display: flex; align-items: center; gap: 10px; margin: 25px 0 23px; height: 27px; font-size: 15.500px; }
.chk span { width: 27px; height: 27px; border-radius: 3px; background: #009845; display: flex; align-items: center; justify-content: center; }
.select { padding: 0 13px; justify-content: space-between; }
.select b { font-weight: 500; }
.seg { display: flex; width: 238px; height: 32px; margin: 20px 0; border: 1px solid #aaa; border-radius: 3px; font-size: 14.300px; line-height: 29px; text-align: center; }
.seg b { width: 119px; font-weight: 500; }
.seg .on { background: #595959; color: #fff; margin: -1px -1px -1px 0; height: 32px; width: 120px; border-radius: 0 3px 3px 0; line-height: 31px; }
.cut-off { padding: 20px 0 0 0; }
.sbar { width: 21px; background: #f1f1f1; }

/* media player overlay */
.player { position: absolute; left: 0; top: 894px; width: 1920px; height: 126px; background: rgba(0,0,0,.63); color: #fff; font-family: "Open Sans", sans-serif; }
.seek { display: flex; align-items: center; height: 41px; padding-left: 50px; font-size: 14px; }
.t { letter-spacing: -.5px; width: 56px; white-space: nowrap; }
.track { position: relative; width: 1666px; height: 5px; margin: 0 21px; border-radius: 3px; background: #b3b3b3; }
.done { display: block; width: 300px; height: 5px; border-radius: 3px; background: #ff8432; }
.thumb { position: absolute; left: 295px; top: -11px; width: 27px; height: 27px; border-radius: 50%; background: #ff8432; border: 7px solid #474747; }
.ctl { display: flex; align-items: center; height: 66px; margin-top: 20px; padding-left: 48px; }
.ctl h3 { width: 716px; font-size: 24px; font-weight: 600; letter-spacing: .1px; line-height: 32px; padding-bottom: 2px; white-space: nowrap; }
.sk { font: 600 12.500px "Open Sans", sans-serif; fill: #fff; text-anchor: middle; }
.rightctl { margin-left: 476px; }

/* taskbar */
.taskbar { position: relative; height: 60px; flex: none; display: flex; align-items: center; border-top: 1px solid #474747; border-bottom: 1px solid #15171b; font-family: "Open Sans", sans-serif; color: #17191b; white-space: nowrap;
  background: linear-gradient(90deg, #59544f 0, #5c5550 10%, #5c5354 22%, #5a5560 29%, #515a63 34%, #4f5a60 45%, #4d585d 65%, #505b63 76%, #5b5355 84%, #5b5250 94%, #575150 100%); }
.widget { margin: -4px 0 0 28px; }
.bd { font: 13px "Open Sans", sans-serif; fill: #c4b0b0; text-anchor: middle; }
.start { margin-left: 156px; }
.tsearch { width: 271px; height: 39px; margin-left: 17px; border-radius: 20px; background: #6a6365; border: 1px solid #726b6c; display: flex; align-items: center; padding-left: 13px; font-size: 17px; color: #2b2b2b; letter-spacing: -.5px; }
.tsearch span { width: 163px; margin-left: 11px; }
.apps { display: flex; height: 58px; }
.app-i { position: relative; width: 55px; display: flex; align-items: center; justify-content: center; }
.app-i.tv { width: 60px; }
.app-i.tm { width: 55px; }
.dot::after, .cur::after { content: ""; position: absolute; left: 23px; bottom: 4px; width: 8px; height: 4px; border-radius: 2px; background: #363b3e; }
.cur::after { left: 18px; width: 20px; background: #194f80; }
.cur { background: linear-gradient(#5d676b, #5d676b) 5px 5px / 44px 49px no-repeat; }
.low { margin-top: 6px; }
.badge { position: absolute; left: 28px; top: 8px; width: 21px; height: 20px; border-radius: 10px; background: #8b4a1c; color: #b9a08c; font-size: 13px; line-height: 20px; text-align: center; }
.badge.wide { left: 24px; width: 34px; background: #1b4c78; color: #9fb0bb; font-size: 14px; z-index: 1; }
.badge.n { left: 26px; width: 26px; background: #1b4c78; color: #9fb0bb; font-size: 14px; letter-spacing: -.5px; }
.caret { margin-left: 86px; }
.mic { margin-left: 20px; }
.lang { width: 32px; margin-left: 18px; font-size: 14.500px; line-height: 24px; text-align: center; letter-spacing: -.4px; margin-top: -2px; }
.tray { margin-left: 22px; margin-top: -2px; }
.clock { width: 82px; margin-left: 14px; font-size: 15px; line-height: 20px; text-align: right; letter-spacing: -.2px; margin-top: -2px; }
.nbell { margin-left: 11px; }
.cop { margin-left: 22px; }
.pre { font: bold 9px "Open Sans", sans-serif; fill: #1c1a12; text-anchor: middle; }
```
